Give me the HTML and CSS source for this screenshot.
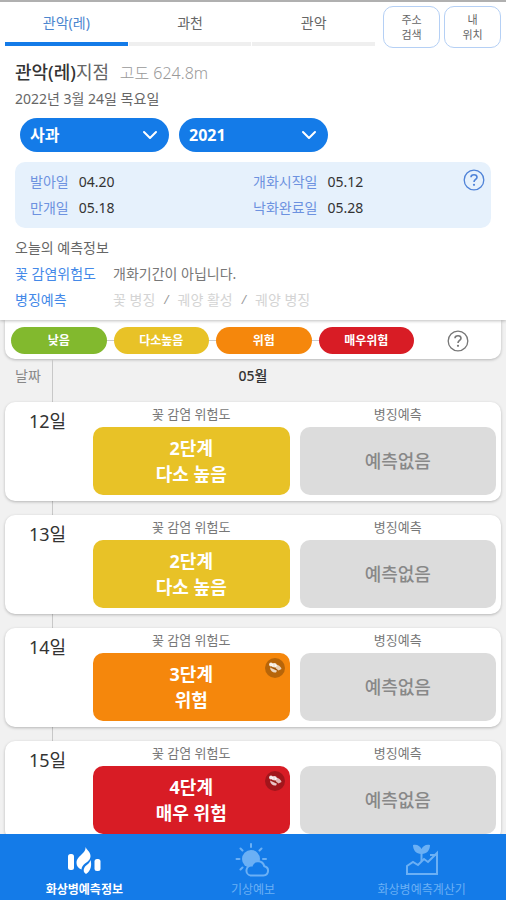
FILE: index.html
```html
<!DOCTYPE html>
<html lang="ko">
<head>
<meta charset="utf-8">
<meta name="viewport" content="width=device-width, initial-scale=1">
<title>화상병예측정보</title>
<link rel="stylesheet" href="styles.css">
</head>
<body>
<svg class="sprite" aria-hidden="true">
  <symbol id="chevron" viewBox="0 0 16 10"><path d="M2 2l6 6 6-6" fill="none" stroke="currentColor" stroke-width="2" stroke-linecap="round" stroke-linejoin="round"/></symbol>
  <symbol id="help" viewBox="0 0 22 22"><circle cx="11" cy="11" r="9.8" fill="none" stroke="currentColor" stroke-width="1.3"/><path d="M8 8.2C8 6.7 9.300 5.700 11 5.700S14 6.700 14 8.300C14 10.400 11 10.600 11 13" fill="none" stroke="currentColor" stroke-width="1.6"/><circle cx="11" cy="15.800" r="1.100" fill="currentColor"/></symbol>
  <symbol id="bee" viewBox="0 0 20 20"><circle cx="10" cy="10" r="10" fill="#000" opacity=".25"/><g fill="#fff"><circle cx="6" cy="6.500" r="1.900" opacity=".9"/><ellipse cx="9.200" cy="7.200" rx="2.600" ry="2.200" opacity=".85"/><path d="M10 6.500c3 0 6 2 6.500 4.500l-3 1.500c-2-1-4-3-3.500-6z" opacity=".7"/><path d="M5 9.500l7 3.300-1 1.700c-3 .5-5.500-1-6-5z" opacity=".75"/></g><path d="M7.500 9.500l5 2.500" stroke="#7a3b16" stroke-width=".9" opacity=".6"/></symbol>
</svg>
<div class="app">
  <header class="header">
    <div class="topbar">
      <nav class="tabs">
        <a class="tab active" href="#">관악(레)</a>
        <a class="tab" href="#">과천</a>
        <a class="tab" href="#">관악</a>
      </nav>
      <div class="actions">
        <button class="action" type="button">주소<br>검색</button>
        <button class="action" type="button">내<br>위치</button>
      </div>
    </div>
    <section class="summary">
      <h1 class="place"><b>관악(레)</b>지점 <span class="altitude">고도 624.8m</span></h1>
      <p class="today">2022년 3월 24일 목요일</p>
      <div class="filters">
        <div class="filter"><select aria-label="작물"><option>사과</option></select><svg class="chevron"><use href="#chevron"/></svg></div>
        <div class="filter"><select aria-label="연도"><option>2021</option></select><svg class="chevron"><use href="#chevron"/></svg></div>
      </div>
      <div class="bloom">
        <dl class="dates"><dt>발아일</dt><dd>04.20</dd><dt>만개일</dt><dd>05.18</dd></dl>
        <dl class="dates"><dt>개화시작일</dt><dd>05.12</dd><dt>낙화완료일</dt><dd>05.28</dd></dl>
        <button class="help" type="button" aria-label="도움말"><svg><use href="#help"/></svg></button>
      </div>
      <h2 class="forecast-title">오늘의 예측정보</h2>
      <dl class="forecast">
        <dt>꽃 감염위험도</dt><dd>개화기간이 아닙니다.</dd>
        <dt>병징예측</dt><dd class="muted"><span>꽃 병징</span><i>/</i><span>궤양 활성</span><i>/</i><span>궤양 병징</span></dd>
      </dl>
    </section>
  </header>
  <main class="main">
    <div class="legend">
      <ul class="levels">
        <li class="level low">낮음</li>
        <li class="level mid">다소높음</li>
        <li class="level high">위험</li>
        <li class="level severe">매우위험</li>
      </ul>
      <button class="help dark" type="button" aria-label="단계 도움말"><svg><use href="#help"/></svg></button>
    </div>
    <div class="month"><span>날짜</span><strong>05월</strong></div>
    <div class="days">
      <article class="day">
        <h3>12일</h3>
        <section><h4>꽃 감염 위험도</h4><p class="box mid">2단계<br>다소 높음</p></section>
        <section><h4>병징예측</h4><p class="box none">예측없음</p></section>
      </article>
      <article class="day">
        <h3>13일</h3>
        <section><h4>꽃 감염 위험도</h4><p class="box mid">2단계<br>다소 높음</p></section>
        <section><h4>병징예측</h4><p class="box none">예측없음</p></section>
      </article>
      <article class="day">
        <h3>14일</h3>
        <section><h4>꽃 감염 위험도</h4><p class="box high">3단계<br>위험<svg class="bee"><use href="#bee"/></svg></p></section>
        <section><h4>병징예측</h4><p class="box none">예측없음</p></section>
      </article>
      <article class="day">
        <h3>15일</h3>
        <section><h4>꽃 감염 위험도</h4><p class="box severe">4단계<br>매우 위험<svg class="bee"><use href="#bee"/></svg></p></section>
        <section><h4>병징예측</h4><p class="box none">예측없음</p></section>
      </article>
    </div>
  </main>
  <nav class="bottom">
    <a class="item active" href="#">
      <svg viewBox="0 0 36 34"><g fill="currentColor"><rect x="2" y="11" width="6" height="16" rx="2.500"/><path d="M19.500 4c1 2.500 5 5 5 9 0 3.500-2.500 5.500-5.500 7.500-2 1.500-3.500 3.500-3.500 6-3-1-5-3.500-5-6.500 0-4 2.500-6 5-8.500 2.500-2.500 4.500-4.500 4-7.500z"/><path d="M24.500 17c1.500 5 .5 11-4.500 14-2.500-1.500-3-4-1.500-6.500 1.500-2.500 5-3.500 6-7.500z"/><rect x="28.500" y="16" width="6" height="12" rx="2.500"/></g></svg>
      <span>화상병예측정보</span>
    </a>
    <a class="item" href="#">
      <svg viewBox="0 0 36 34"><g stroke="currentColor" stroke-width="2" stroke-linecap="round"><path d="M16 1v3M5.500 5.500l2 2M26.500 5.500l-2 2M1.500 16h3M28 16h3M5.500 26.500l2-2" fill="none"/></g><circle cx="16" cy="16" r="9" fill="currentColor"/><path d="M15.500 32.500h13a4.700 4.700 0 0 0 .8-9.300 6.600 6.600 0 0 0-12.600-.6 5 5 0 0 0-1.200 9.900z" fill="#147be8" stroke="currentColor" stroke-width="2"/></svg>
      <span>기상예보</span>
    </a>
    <a class="item" href="#">
      <svg viewBox="0 0 36 34"><g fill="none" stroke="currentColor" stroke-width="2"><path d="M3 31V23l6-4 5 3 6-6 4 3 9-9v21z"/><path d="M17.500 9v9"/><path d="M26 12h7v6"/></g><path d="M17.500 11C12 11 9 7 9 2c4-1 7 1 8.500 4C19 3 22 1 26 2c0 5-3 9-8.500 9z" fill="currentColor"/></svg>
      <span>화상병예측계산기</span>
    </a>
  </nav>
</div>
</body>
</html>
```
FILE: styles.css
```css
* { box-sizing: border-box; margin: 0; padding: 0; }

body {
  font-family: "Noto Sans", "Noto Sans CJK KR", sans-serif;
  font-size: 14px;
  line-height: 26px;
  color: #666;
  background: #f1f1f1;
}

button, select { font: inherit; border: 0; background: none; }
a { color: inherit; text-decoration: none; }
ul { list-style: none; }
.sprite { position: absolute; width: 0; height: 0; }

.app { display: flex; flex-direction: column; height: 100vh; }

/* Header */
.header {
  position: relative;
  z-index: 1;
  flex: none;
  padding-bottom: 7px;
  border-top: 2px solid #b0b0b0;
  background: #fff;
  box-shadow: 0 1px 3px rgba(0, 0, 0, .25);
}

.topbar { display: flex; gap: 8px; padding: 4px 5px 0; }
.tabs { display: flex; flex: 1; gap: 1px; height: 40px; }
.tab {
  flex: 1;
  padding-top: 4px;
  text-align: center;
  border-bottom: 4px solid #efefef;
}
.tab.active { color: #4b86cf; border-color: #147be8; }
.actions { display: flex; gap: 4px; }
.action {
  width: 57px;
  height: 42px;
  border: 1px solid #b5d0f5;
  border-radius: 10px;
  color: #666;
  font-size: 11px;
  line-height: 15px;
}

.summary { padding: 10px 15px 0; }
.place { font-size: 18px; font-weight: 400; line-height: 28px; }
.place b { font-weight: 500; color: #333; }
.altitude { margin-left: 6px; font-size: 16px; font-weight: 300; color: #999; }
.today { line-height: 23px; }

.filters { display: flex; gap: 10px; padding: 8px 5px 10px; }
.filter { position: relative; width: 149px; }
.filter select {
  display: block;
  width: 100%;
  height: 34px;
  padding: 0 10px;
  border-radius: 17px;
  appearance: none;
  background: #147be8;
  color: #fff;
  font-size: 16px;
  font-weight: 700;
}
.chevron {
  position: absolute;
  top: 12px;
  right: 11px;
  width: 16px;
  height: 10px;
  color: #fff;
  pointer-events: none;
}

.bloom {
  display: grid;
  grid-template-columns: 223px 1fr 22px;
  padding: 7px 6px 7px 15px;
  border-radius: 10px;
  background: #e6f1fc;
}
.dates {
  display: grid;
  grid-template-columns: auto 1fr;
  column-gap: 10px;
}
.dates dt { color: #6d92e0; }
.dates dd { color: #333; }
.help { display: block; width: 22px; height: 22px; color: #4f83d8; }
.help svg { display: block; width: 22px; height: 22px; }

.forecast-title { padding-top: 7px; font-size: 14px; font-weight: 400; }
.forecast { display: grid; grid-template-columns: 98px 1fr; }
.forecast dt { color: #4489e8; }
.forecast dd { color: #777; }
.forecast .muted { display: flex; gap: 9px; color: #d4d4d4; }
.muted i { color: #999; font-size: 12px; }

/* Daily list */
.main {
  position: relative;
  flex: 1;
  min-height: 0;
  padding: 0 5px;
  overflow-y: auto;
  scrollbar-width: none;
}

.legend {
  display: flex;
  align-items: center;
  padding: 7px 32px 5px 6px;
  border-radius: 0 0 10px 10px;
  background: #fff;
  box-shadow: 0 1px 3px rgba(0, 0, 0, .25);
}
.levels {
  display: flex;
  flex: 1;
  gap: 7px;
  margin-right: 33px;
  background: linear-gradient(#ccc, #ccc) center / 90% 1px no-repeat;
}
.level {
  flex: 1;
  border-radius: 14px;
  color: #fff;
  font-size: 12px;
  font-weight: 700;
  line-height: 27px;
  text-align: center;
}
.low { background: #82b92e; }
.mid { background: #e8c227; }
.high { background: #f5870c; }
.severe { background: #d81c25; }
.none { background: #dcdcdc; }
.dark { color: #777; }

.month {
  display: grid;
  grid-template-columns: 47px 1fr 47px;
  height: 43px;
  padding-top: 4px;
  color: #888;
}
.month span { padding-left: 10px; }
.month strong { color: #333; font-weight: 500; text-align: center; }

.days {
  display: grid;
  gap: 14px;
  padding-bottom: 14px;
}
.month, .days { background: linear-gradient(#c8c8c8, #c8c8c8) 47px 0 / 1px 100% no-repeat; }

.day {
  display: grid;
  grid-template-columns: 78px 1fr 1fr;
  column-gap: 10px;
  padding: 0 5px 6px 0;
  border-radius: 10px;
  background: #fff;
  box-shadow: 0 1px 3px rgba(0, 0, 0, .25);
}
.day h3 {
  padding: 6px 0 0 24px;
  color: #333;
  font-size: 18px;
  font-weight: 400;
}
.day h4 {
  color: #777;
  font-size: 13px;
  font-weight: 400;
  line-height: 25px;
  text-align: center;
}
.box {
  position: relative;
  display: grid;
  place-content: center;
  height: 68px;
  border-radius: 10px;
  color: #fff;
  font-size: 18px;
  font-weight: 700;
  line-height: 26px;
  text-align: center;
}
.box.none { color: #888; font-weight: 500; }
.bee { position: absolute; top: 5px; right: 5px; width: 20px; height: 20px; }

/* Bottom navigation */
.bottom { display: flex; flex: none; height: 66px; background: #147be8; }
.item {
  display: flex;
  flex: 1;
  flex-direction: column;
  align-items: center;
  padding-top: 9px;
  color: #6bb0f5;
  font-size: 12px;
  line-height: 18px;
}
.item svg { width: 36px; height: 34px; margin-bottom: 4px; }
.item.active { color: #fff; font-weight: 700; }
```
